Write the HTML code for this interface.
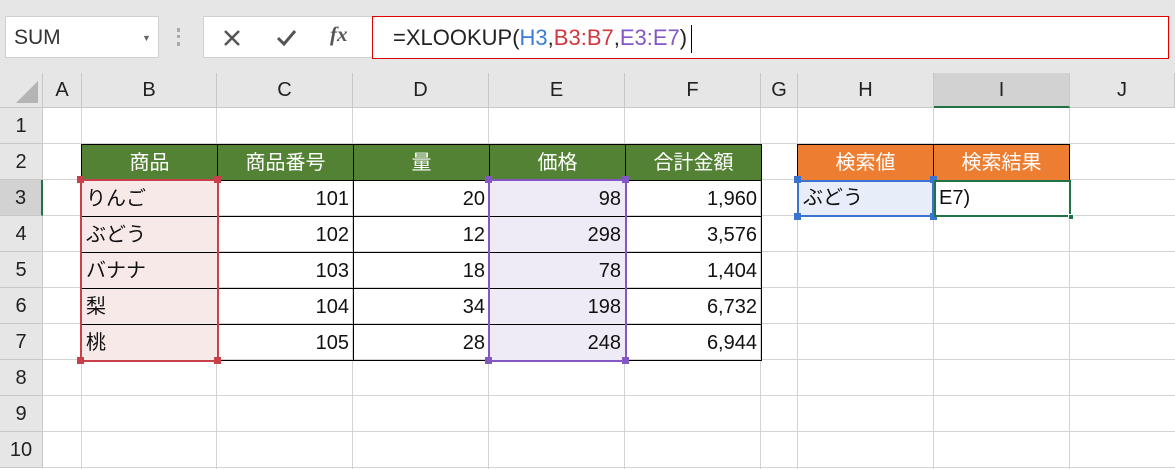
<!DOCTYPE html>
<html><head><meta charset="utf-8"><style>
body{margin:0;width:1175px;height:469px;overflow:hidden;background:#fff;position:relative;font-family:"Liberation Sans","Noto Sans CJK JP",sans-serif;}
div{position:absolute;box-sizing:border-box;}
.tb{left:0;top:0;width:1175px;height:73px;background:#e6e6e6;}
.hdr{top:73px;height:35px;background:#e6e6e6;border-right:1px solid #c8c8c8;border-bottom:1px solid #c8c8c8;text-align:center;line-height:35px;font-size:20px;color:#222;}
.rh{left:0;width:43px;height:36px;background:#e6e6e6;border-bottom:1px solid #c8c8c8;border-right:1px solid #c8c8c8;text-align:center;line-height:36px;font-size:20px;color:#222;}
.vl{top:108px;width:1px;height:361px;background:#d4d4d4;}
.hl{left:43px;width:1132px;height:1px;background:#d4d4d4;}
.c{height:36px;line-height:36px;font-size:20px;color:#111;padding:0 4px;white-space:nowrap;}
.g{background:#548235;color:#fff;text-align:center;border:1px solid #000;}
.o{background:#ed7d31;color:#fff;text-align:center;border:1px solid #000;}
.n{text-align:right;border:1px solid #000;}
.h{width:7px;height:7px;}
</style></head><body>
<div class="tb"></div>
<div style="left:5px;top:16px;width:154px;height:42px;background:#fff;border:1px solid #d0d0d0;font-size:21px;line-height:42px;padding-left:8px;color:#333;">SUM<span style="position:absolute;left:136px;top:0;font-size:9px;color:#666">▼</span></div>
<div style="left:177px;top:28px;width:3px;height:18px;border-left:3px dotted #aaa"></div>
<div style="left:203px;top:16px;width:170px;height:42px;background:#fff;border:1px solid #d0d0d0;"></div>
<svg style="position:absolute;left:222px;top:28px" width="20" height="20"><path d="M3 3L17 17M17 3L3 17" stroke="#555" stroke-width="2.5"/></svg>
<svg style="position:absolute;left:275px;top:28px" width="24" height="20"><path d="M3 10L9 16L20 3" stroke="#555" stroke-width="3" fill="none"/></svg>
<div style="left:330px;top:22px;font:italic bold 21px 'Liberation Serif',serif;color:#555;">fx</div>
<div style="left:372px;top:16px;width:797px;height:43px;background:#fff;border:1px solid #e00000;font-size:22px;line-height:41px;padding-left:20px;color:#222;">=XLOOKUP(<span style="color:#3b7dd8">H3</span>,<span style="color:#d0373f">B3:B7</span>,<span style="color:#8357c4">E3:E7</span>)<span style="display:inline-block;width:1px;height:28px;background:#000;vertical-align:middle;margin-left:4px"></span></div>

<div class="hdr" style="left:0;width:43px;"><svg style="position:absolute;left:12px;top:6px" width="28" height="26"><path d="M26 2L26 24L4 24Z" fill="#b4b4b4"/></svg></div>
<div class="hdr" style="left:43px;width:39px">A</div>
<div class="hdr" style="left:82px;width:135px">B</div>
<div class="hdr" style="left:217px;width:136px">C</div>
<div class="hdr" style="left:353px;width:136px">D</div>
<div class="hdr" style="left:489px;width:136px">E</div>
<div class="hdr" style="left:625px;width:136px">F</div>
<div class="hdr" style="left:761px;width:37px">G</div>
<div class="hdr" style="left:798px;width:136px">H</div>
<div class="hdr" style="left:934px;width:136px;background:#d2d2d2;border-bottom:2px solid #217346">I</div>
<div class="hdr" style="left:1070px;width:105px">J</div>

<div class="rh" style="top:108px">1</div>
<div class="rh" style="top:144px">2</div>
<div class="rh" style="top:180px;background:#d2d2d2;border-right:2px solid #217346">3</div>
<div class="rh" style="top:216px">4</div>
<div class="rh" style="top:252px">5</div>
<div class="rh" style="top:288px">6</div>
<div class="rh" style="top:324px">7</div>
<div class="rh" style="top:360px">8</div>
<div class="rh" style="top:396px">9</div>
<div class="rh" style="top:432px">10</div>

<div class="vl" style="left:81px"></div><div class="vl" style="left:216px"></div><div class="vl" style="left:352px"></div><div class="vl" style="left:488px"></div><div class="vl" style="left:624px"></div><div class="vl" style="left:760px"></div><div class="vl" style="left:797px"></div><div class="vl" style="left:933px"></div><div class="vl" style="left:1069px"></div>
<div class="hl" style="top:143px"></div><div class="hl" style="top:179px"></div><div class="hl" style="top:215px"></div><div class="hl" style="top:251px"></div><div class="hl" style="top:287px"></div><div class="hl" style="top:323px"></div><div class="hl" style="top:359px"></div><div class="hl" style="top:395px"></div><div class="hl" style="top:431px"></div><div class="hl" style="top:467px"></div>

<!-- header row -->
<div class="c g" style="left:81px;top:144px;width:137px;height:37px">商品</div>
<div class="c g" style="left:217px;top:144px;width:137px;height:37px">商品番号</div>
<div class="c g" style="left:353px;top:144px;width:137px;height:37px">量</div>
<div class="c g" style="left:489px;top:144px;width:137px;height:37px">価格</div>
<div class="c g" style="left:625px;top:144px;width:137px;height:37px">合計金額</div>

<!-- data rows -->
<div class="c n" style="left:81px;top:180px;width:137px;height:37px;text-align:left;background:#f8e9e9">りんご</div>
<div class="c n" style="left:217px;top:180px;width:137px;height:37px">101</div>
<div class="c n" style="left:353px;top:180px;width:137px;height:37px">20</div>
<div class="c n" style="left:489px;top:180px;width:137px;height:37px;background:#efebf6">98</div>
<div class="c n" style="left:625px;top:180px;width:137px;height:37px">1,960</div>

<div class="c n" style="left:81px;top:216px;width:137px;height:37px;text-align:left;background:#f8e9e9">ぶどう</div>
<div class="c n" style="left:217px;top:216px;width:137px;height:37px">102</div>
<div class="c n" style="left:353px;top:216px;width:137px;height:37px">12</div>
<div class="c n" style="left:489px;top:216px;width:137px;height:37px;background:#efebf6">298</div>
<div class="c n" style="left:625px;top:216px;width:137px;height:37px">3,576</div>

<div class="c n" style="left:81px;top:252px;width:137px;height:37px;text-align:left;background:#f8e9e9">バナナ</div>
<div class="c n" style="left:217px;top:252px;width:137px;height:37px">103</div>
<div class="c n" style="left:353px;top:252px;width:137px;height:37px">18</div>
<div class="c n" style="left:489px;top:252px;width:137px;height:37px;background:#efebf6">78</div>
<div class="c n" style="left:625px;top:252px;width:137px;height:37px">1,404</div>

<div class="c n" style="left:81px;top:288px;width:137px;height:37px;text-align:left;background:#f8e9e9">梨</div>
<div class="c n" style="left:217px;top:288px;width:137px;height:37px">104</div>
<div class="c n" style="left:353px;top:288px;width:137px;height:37px">34</div>
<div class="c n" style="left:489px;top:288px;width:137px;height:37px;background:#efebf6">198</div>
<div class="c n" style="left:625px;top:288px;width:137px;height:37px">6,732</div>

<div class="c n" style="left:81px;top:324px;width:137px;height:37px;text-align:left;background:#f8e9e9">桃</div>
<div class="c n" style="left:217px;top:324px;width:137px;height:37px">105</div>
<div class="c n" style="left:353px;top:324px;width:137px;height:37px">28</div>
<div class="c n" style="left:489px;top:324px;width:137px;height:37px;background:#efebf6">248</div>
<div class="c n" style="left:625px;top:324px;width:137px;height:37px">6,944</div>

<!-- range highlights -->
<div style="left:80px;top:179px;width:139px;height:183px;border:2px solid #c8404a"></div>
<div class="h" style="left:77px;top:176px;background:#c8404a"></div><div class="h" style="left:214px;top:176px;background:#c8404a"></div>
<div class="h" style="left:77px;top:357px;background:#c8404a"></div><div class="h" style="left:214px;top:357px;background:#c8404a"></div>
<div style="left:488px;top:179px;width:139px;height:183px;border:2px solid #8357c4"></div>
<div class="h" style="left:485px;top:176px;background:#8357c4"></div><div class="h" style="left:622px;top:176px;background:#8357c4"></div>
<div class="h" style="left:485px;top:357px;background:#8357c4"></div><div class="h" style="left:622px;top:357px;background:#8357c4"></div>

<!-- lookup -->
<div class="c o" style="left:797px;top:144px;width:137px;height:37px">検索値</div>
<div class="c o" style="left:933px;top:144px;width:137px;height:37px">検索結果</div>
<div class="c" style="left:797px;top:180px;width:137px;height:37px;background:#e7eef9;border:2px solid #3b74d0;line-height:33px">ぶどう</div>
<div class="h" style="left:794px;top:176px;background:#3b74d0"></div><div class="h" style="left:930px;top:176px;background:#3b74d0"></div>
<div class="h" style="left:794px;top:213px;background:#3b74d0"></div><div class="h" style="left:930px;top:213px;background:#3b74d0"></div>
<div class="c" style="left:934px;top:180px;width:137px;height:37px;border:2px solid #217346;line-height:33px;background:#fff;padding-left:3px">E7)</div>
<div class="h" style="left:1068px;top:214px;width:6px;height:6px;background:#217346;border:1px solid #fff"></div>
</body></html>
